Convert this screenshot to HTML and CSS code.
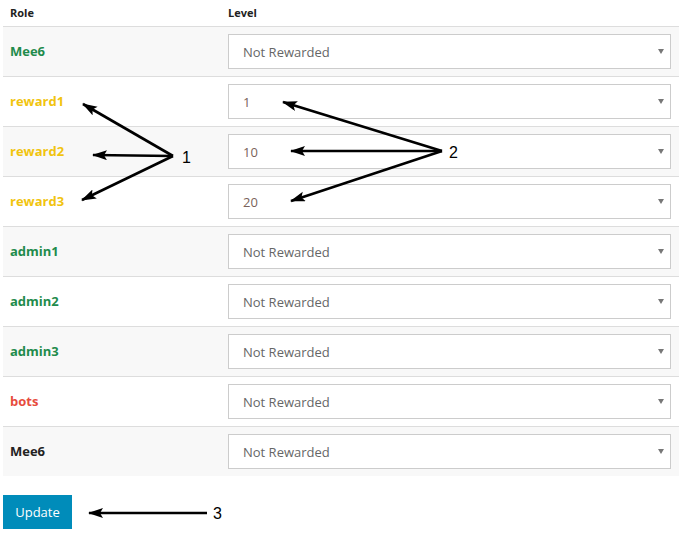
FILE: index.html
```html
<!DOCTYPE html>
<html>
<head>
<meta charset="utf-8">
<link rel="stylesheet" href="styles.css">
</head>
<body>
<div class="page">
  <div class="table">
    <div class="row head">
      <div class="cell">Role</div>
      <div class="cell">Level</div>
    </div>
    <div class="row striped">
      <div class="cell role green">Mee6</div>
      <div class="cell"><div class="sel"><select><option>Not Rewarded</option></select></div></div>
    </div>
    <div class="row">
      <div class="cell role yellow">reward1</div>
      <div class="cell"><div class="sel"><select class="num"><option>1</option></select></div></div>
    </div>
    <div class="row striped">
      <div class="cell role yellow">reward2</div>
      <div class="cell"><div class="sel"><select class="num"><option>10</option></select></div></div>
    </div>
    <div class="row">
      <div class="cell role yellow">reward3</div>
      <div class="cell"><div class="sel"><select class="num"><option>20</option></select></div></div>
    </div>
    <div class="row striped">
      <div class="cell role green">admin1</div>
      <div class="cell"><div class="sel"><select><option>Not Rewarded</option></select></div></div>
    </div>
    <div class="row">
      <div class="cell role green">admin2</div>
      <div class="cell"><div class="sel"><select><option>Not Rewarded</option></select></div></div>
    </div>
    <div class="row striped">
      <div class="cell role green">admin3</div>
      <div class="cell"><div class="sel"><select><option>Not Rewarded</option></select></div></div>
    </div>
    <div class="row">
      <div class="cell role red">bots</div>
      <div class="cell"><div class="sel"><select><option>Not Rewarded</option></select></div></div>
    </div>
    <div class="row striped last">
      <div class="cell role dark">Mee6</div>
      <div class="cell"><div class="sel"><select><option>Not Rewarded</option></select></div></div>
    </div>
  </div>
  <button class="btn">Update</button>
</div>
<svg class="annot" width="688" height="538" viewBox="0 0 688 538">
  <defs>
    <marker id="ah" markerWidth="16" markerHeight="12" refX="14" refY="5" orient="auto" markerUnits="userSpaceOnUse">
      <path d="M0,0 L15,5 L0,10 L3,5 Z" fill="#000"/>
    </marker>
  </defs>
  <g stroke="#000" stroke-width="2.6" fill="none">
    <line x1="173" y1="156" x2="83" y2="104" marker-end="url(#ah)"/>
    <line x1="173" y1="156" x2="93" y2="155" marker-end="url(#ah)"/>
    <line x1="173" y1="156" x2="82" y2="200" marker-end="url(#ah)"/>
    <line x1="442" y1="151" x2="283" y2="102" marker-end="url(#ah)"/>
    <line x1="442" y1="151" x2="291" y2="151" marker-end="url(#ah)"/>
    <line x1="442" y1="151" x2="291" y2="201" marker-end="url(#ah)"/>
    <line x1="207" y1="513" x2="89" y2="513" marker-end="url(#ah)"/>
  </g>
  <g class="lbl">
    <text x="182" y="163">1</text>
    <text x="449" y="158">2</text>
    <text x="213" y="519">3</text>
  </g>
</svg>
</body>
</html>
```
FILE: styles.css
```css
* { box-sizing: border-box; }
html, body { margin: 0; padding: 0; background: #fff; }
body {
  position: relative;
  width: 688px;
  height: 538px;
  font-family: "Open Sans", sans-serif;
  overflow: hidden;
}
.page {
  padding: 0 9px 0 3px;
  display: flex;
  flex-direction: column;
  align-items: flex-start;
}
.table {
  width: 676px;
  display: flex;
  flex-direction: column;
}
.row {
  display: grid;
  grid-template-columns: 218px 1fr;
  height: 50px;
  align-items: center;
  border-bottom: 1px solid #dddddd;
}
.row.last { border-bottom: none; height: 49px; }
.row.striped { background: #f8f8f8; }
.row.head {
  height: 27px;
  font-size: 11px;
  font-weight: 700;
  color: #222;
  padding-bottom: 1px;
}
.cell { padding: 0 8px 0 7px; }
.role { font-size: 13px; font-weight: 700; padding-bottom: 2px; }
.green { color: #1f8b4c; }
.yellow { color: #f1c40f; }
.red { color: #e74c3c; }
.dark { color: #222; }
.sel { position: relative; }
.sel::after {
  content: "";
  position: absolute;
  right: 7px;
  top: 15px;
  border-left: 3px solid transparent;
  border-right: 3px solid transparent;
  border-top: 5px solid #777;
}
select {
  -webkit-appearance: none;
  appearance: none;
  display: block;
  width: 443px;
  height: 35px;
  border: 1px solid #cccccc;
  border-radius: 0;
  background: #fff;
  font-family: "Open Sans", sans-serif;
  font-size: 13px;
  color: #666;
  padding: 0 14px 0 14px;
  margin: 0;
  outline: none;
}
select.num { color: #7a625a; }
.btn {
  margin-top: 19px;
  width: 69px;
  height: 34px;
  background: #008cba;
  color: #fff;
  border: none;
  border-radius: 0;
  font-family: "Open Sans", sans-serif;
  font-size: 13px;
  padding: 0;
}
.annot {
  position: absolute;
  left: 0;
  top: 0;
  pointer-events: none;
}
.lbl text {
  font-family: "Liberation Sans", Arial, sans-serif;
  font-size: 16px;
  fill: #000;
}
```
